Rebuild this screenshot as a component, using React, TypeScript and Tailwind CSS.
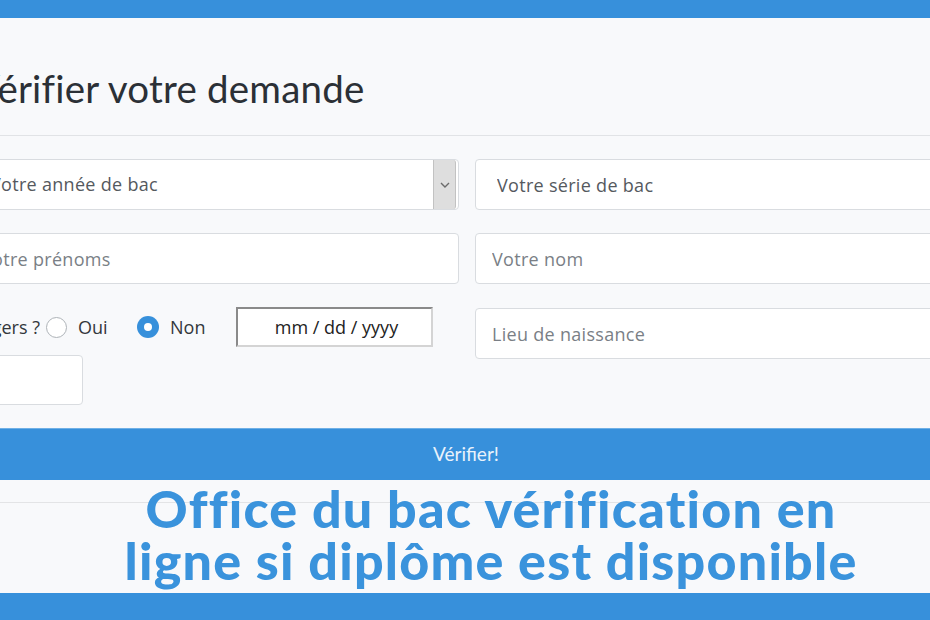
export default function App() {
  const lato = { fontFamily: "Lato, 'Open Sans', sans-serif" };
  const open = { fontFamily: "'Open Sans', Lato, sans-serif" };
  return (
    <div
      className="w-[930px] h-[620px] overflow-hidden bg-[#f8f9fb] flex flex-col"
      style={lato}
    >
      {/* top bar */}
      <div className="h-[18px] shrink-0 bg-[#3790db]" />

      {/* title */}
      <div className="h-[118px] shrink-0 border-b border-[#e1e3e6] -ml-[26px] flex items-center pt-[24px]">
        <h1 className="text-[38.5px] text-[#2b3036] font-normal leading-none tracking-[0.2px]">
          Vérifier votre demande
        </h1>
      </div>

      {/* form */}
      <div
        className="-ml-[35px] w-[1004px] grid grid-cols-2 gap-x-[16px] gap-y-[23px] pt-[23px]"
        style={open}
      >
        {/* select */}
        <div className="h-[51px] bg-white border border-[#d9dce0] rounded-[4px] flex items-center">
          <span className="flex-1 pl-[24px] text-[18px] tracking-[0.3px] text-[#55595e]">
            Votre année de bac
          </span>
          <div className="w-[23px] h-[49px] mr-[2px] bg-[#dedede] border-x border-[#c2c2c2] rounded-r-[3px] flex items-center justify-center">
            <svg width="10" height="6" viewBox="0 0 10 6" fill="none">
              <path d="M1 1l4 4 4-4" stroke="#6b6b6b" strokeWidth="1.4" />
            </svg>
          </div>
        </div>
        <input
          placeholder="Votre série de bac"
          className="h-[51px] bg-white border border-[#d9dce0] rounded-[4px] pl-[21px] text-[18px] tracking-[0.3px] placeholder:text-[#55595e] outline-none"
        />

        <input
          placeholder="Votre prénoms"
          className="h-[51px] bg-white border border-[#d9dce0] rounded-[4px] pl-[15px] text-[18px] tracking-[0.3px] placeholder:text-[#7a7f86] outline-none"
        />
        <input
          placeholder="Votre nom"
          className="h-[51px] bg-white border border-[#d9dce0] rounded-[4px] pl-[16px] text-[18px] tracking-[0.3px] placeholder:text-[#7a7f86] outline-none"
        />

        {/* row 3 left */}
        <div className="flex flex-col">
          <div className="h-[40px] flex items-center text-[18px] text-[#33373c]">
            <span className="w-[75px] whitespace-nowrap overflow-hidden flex justify-end">
              <span>Étrangers ?</span>
            </span>
            <span className="ml-[6px] w-[21px] h-[21px] shrink-0 rounded-full border border-[#aeb3b8] bg-white" />
            <span className="ml-[11px] w-[31px]">Oui</span>
            <span className="ml-[28px] w-[22px] h-[22px] shrink-0 rounded-full bg-[#3790db] flex items-center justify-center">
              <span className="w-[8px] h-[8px] rounded-full bg-white" />
            </span>
            <span className="ml-[11px] w-[37px]">Non</span>
            <div className="ml-[29px] w-[197px] h-[40px] shrink-0 bg-white border-2 border-t-[#8a8a8a] border-l-[#8a8a8a] border-r-[#d4d4d4] border-b-[#d4d4d4] flex items-center justify-center text-[18px] text-[#222] pl-[4px]">
              mm / dd / yyyy
            </div>
          </div>
          <div className="mt-[8px] w-[118px] h-[50px] bg-white border border-[#d9dce0] rounded-[4px]" />
        </div>
        <input
          placeholder="Lieu de naissance"
          className="h-[51px] mt-[1px] bg-white border border-[#d9dce0] rounded-[4px] pl-[16px] text-[18px] tracking-[0.3px] placeholder:text-[#7a7f86] outline-none"
        />
      </div>

      {/* button */}
      <button className="mt-[23px] h-[52px] shrink-0 w-full bg-[#3790db] border-t border-[#6fb0e6] text-[19px] text-[#e9f2fb] pl-[2px]">
        Vérifier!
      </button>

      {/* banner text */}
      <div className="flex-1 flex flex-col">
        <div className="mt-[22px] border-t border-[#e3e4e6]" />
        <p className="-mt-[21px] pl-[52px] text-center text-[52px] leading-[52px] font-black text-[#3a93dc] tracking-[1.2px]">
          Office du bac vérification en
          <br />
          ligne si diplôme est disponible
        </p>
      </div>

      {/* bottom bar */}
      <div className="h-[27px] shrink-0 bg-[#3790db]" />
    </div>
  );
}
